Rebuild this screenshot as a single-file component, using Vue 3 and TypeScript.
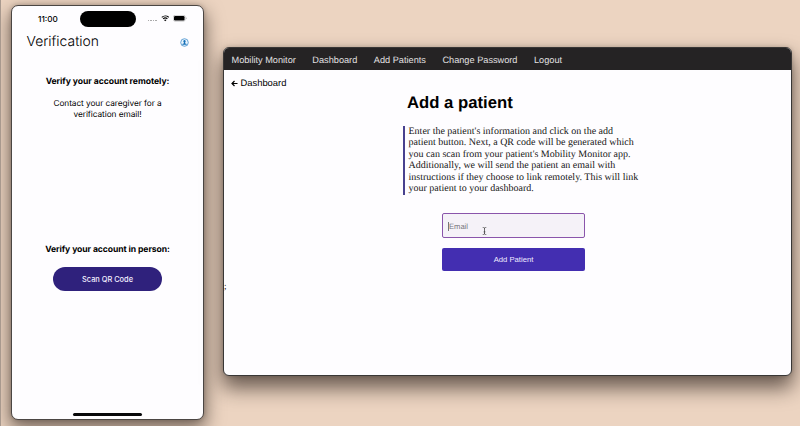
<script setup lang="ts">
const links: string[] = ['Mobility Monitor', 'Dashboard', 'Add Patients', 'Change Password', 'Logout']
const intro: string[] = [
  "Enter the patient's information and click on the add",
  'patient button. Next, a QR code will be generated which',
  "you can scan from your patient's Mobility Monitor app.",
  'Additionally, we will send the patient an email with',
  'instructions if they choose to link remotely. This will link',
  'your patient to your dashboard.',
]
</script>

<template>
  <main class="desktop">
    <section class="phone">
      <div class="status">
        <span class="time">11:00</span>
        <span class="island"></span>
        <span class="signals">
          <i class="dots"><b v-for="n in 4" :key="n"></b></i>
          <svg class="wifi" viewBox="0 0 16 12">
            <path d="M1.5 4.2a9.5 9.5 0 0 1 13 0M4 7.1a5.8 5.8 0 0 1 8 0" fill="none" stroke="#000" stroke-width="2" />
            <path d="M8 11.6 5.7 9.3a3.3 3.3 0 0 1 4.6 0z" />
          </svg>
          <svg class="battery" viewBox="0 0 28 13">
            <rect x=".6" y=".6" width="23.8" height="11.8" rx="3.6" fill="none" stroke="#999" />
            <rect x="2" y="2" width="21" height="9" rx="2.4" />
            <path d="M26 4.5c1.6.6 1.6 3.4 0 4z" fill="#999" />
          </svg>
        </span>
      </div>
      <header class="title-row">
        <h1>Verification</h1>
        <svg class="account" viewBox="0 0 18 18">
          <circle cx="9" cy="9" r="7.6" fill="#e9f4fd" stroke="#3988c8" stroke-width="1.5" />
          <ellipse cx="9" cy="6.8" rx="2.2" ry="2.7" fill="#1670b8" />
          <path d="M8 8h2v2.5l3.4 1.3v1.7H4.6v-1.7L8 10.5z" fill="#1670b8" />
        </svg>
      </header>
      <h2 class="remote">Verify your account remotely:</h2>
      <p class="contact">Contact your caregiver for a<br />verification email!</p>
      <h2 class="person">Verify your account in person:</h2>
      <button class="scan">Scan QR Code</button>
      <span class="home"></span>
    </section>

    <section class="browser">
      <nav>
        <a v-for="link in links" :key="link">{{ link }}</a>
      </nav>
      <div class="page">
        <a class="back">
          <svg viewBox="0 0 14 14"><path d="M13 7H2.5M7 2 2 7l5 5" fill="none" stroke="#000" stroke-width="2.4" /></svg>
          <span>Dashboard</span>
        </a>
        <h3>Add a patient</h3>
        <div class="intro"><div v-for="line in intro" :key="line"><span>{{ line }}</span></div></div>
        <div class="field">
          <span class="caret"></span><span class="placeholder">Email</span>
          <svg class="pointer" viewBox="0 0 5 9"><path d="M.5.5h1l1 .7 1-.7h1M2.5 1v7M.5 8.5h1l1-.7 1 .7h1M1.5 5.5h2" fill="none" stroke="#333" stroke-width=".8" /></svg>
        </div>
        <button class="add">Add Patient</button>
        <span class="stray">;</span>
      </div>
    </section>
  </main>
</template>

<style>
body { margin: 0; overflow: hidden; }
</style>

<style scoped>
* { box-sizing: border-box; }
h1, h2, h3, p { margin: 0; white-space: nowrap; }
button { border: 0; padding: 0; }
.desktop {
  position: relative; width: 800px; height: 426px; overflow: hidden;
  background: #ecd4c1; border-left: 1px solid #a8998e;
  font-family: "Liberation Sans", Arial, sans-serif; color: #000;
  text-rendering: geometricPrecision;
}
.phone {
  position: absolute; left: 10px; top: 5px; width: 193px; height: 415px;
  border: 1px solid #4b4643; border-radius: 7px; background: #fefdff;
  box-shadow: 0 8px 18px 2px rgba(35, 25, 20, .55), 0 0 4px rgba(35, 25, 20, .25);
  display: flex; flex-direction: column; align-items: center;
  font-family: Inter, "Liberation Sans", sans-serif;
}
.status { width: 100%; height: 24px; padding: 5px 16px 0 26px; display: flex; align-items: flex-start; flex: none; }
.time { width: 42px; font-size: 8.2px; line-height: 16px; font-weight: 500; }
.island { width: 56px; height: 16px; border-radius: 8px; background: #000; }
.signals { display: flex; align-items: center; height: 15px; margin-left: auto; }
.dots { display: flex; gap: 1px; margin: 4px 4px 0 0; }
.dots b { width: 1.5px; height: 1.5px; background: #aaa; }
.wifi { width: 8.5px; height: 6.5px; margin-right: 4px; }
.battery { width: 14px; height: 6.5px; }
.title-row { width: 100%; height: 24px; flex: none; padding: 0 14px 0 14.5px; display: flex; justify-content: space-between; align-items: center; }
h1 { font-size: 13.9px; font-weight: 350; line-height: 24px; }
.account { width: 9px; height: 9px; }
h2 { font-size: 8.6px; line-height: 12px; font-weight: 650; letter-spacing: -.05px; }
.remote { margin-top: 22px; }
.contact { margin-top: 11px; font-size: 8.3px; line-height: 11px; text-align: center; letter-spacing: -.07px; }
.person { margin-top: 123px; letter-spacing: -.08px; }
.scan { width: 109px; height: 24px; margin-top: 11px; border-radius: 12px; background: #2f217c; color: #f3efff; font: 500 7.4px/25px Inter, sans-serif; }
.home { width: 69px; height: 3px; border-radius: 2px; background: #08080a; margin-top: auto; margin-bottom: 3px; }
.browser {
  position: absolute; left: 222px; top: 47px; width: 569px; height: 329px;
  border: 1px solid #393736; border-radius: 6px; background: #fefdff;
  box-shadow: 0 11px 20px 1px rgba(35, 25, 20, .65), 0 0 4px rgba(35, 25, 20, .2);
}
nav { height: 22px; background: #252324; border-radius: 5px 5px 0 0; display: flex; padding: 2px 0 0 7.5px; gap: 16.5px; }
nav a { color: #e2e0e2; font-size: 9.2px; line-height: 20px; white-space: nowrap; }
.page { display: flex; flex-direction: column; align-items: flex-start; }
.back { display: flex; align-items: center; gap: 2.5px; margin: 7px 0 0 7px; font-size: 9.4px; line-height: 12px; }
.back svg { width: 7px; height: 7px; }
h3 { font-size: 16.7px; line-height: 20px; margin: 4px 0 0 183px; }
.intro {
  margin: 13px 0 0 179px; border-left: 2px solid #48418f; padding-left: 3.5px; height: 69px;
  font: 10px/11.45px "Liberation Serif", "Times New Roman", serif; white-space: nowrap; color: #151515;
}
.field {
  margin: 18px 0 0 218px; width: 143px; height: 25px; border: 1.5px solid #8a55ab; border-radius: 2px;
  background: #f5f2f8; display: flex; align-items: center; padding: 1px 0 0 5px; font-size: 7.6px; color: #77747b;
}
.caret { width: 1px; height: 9px; background: #777; }
.pointer { width: 5px; height: 8px; margin: 10px 0 0 13.5px; }
.add { margin: 10px 0 0 218px; width: 143px; height: 23px; border-radius: 2px; background: #432eb1; color: #eeeaff; font: 7.7px/23px "Liberation Sans", sans-serif; }
.stray { font: 9px/12px "Liberation Serif", serif; margin-top: 9px; }
</style>
